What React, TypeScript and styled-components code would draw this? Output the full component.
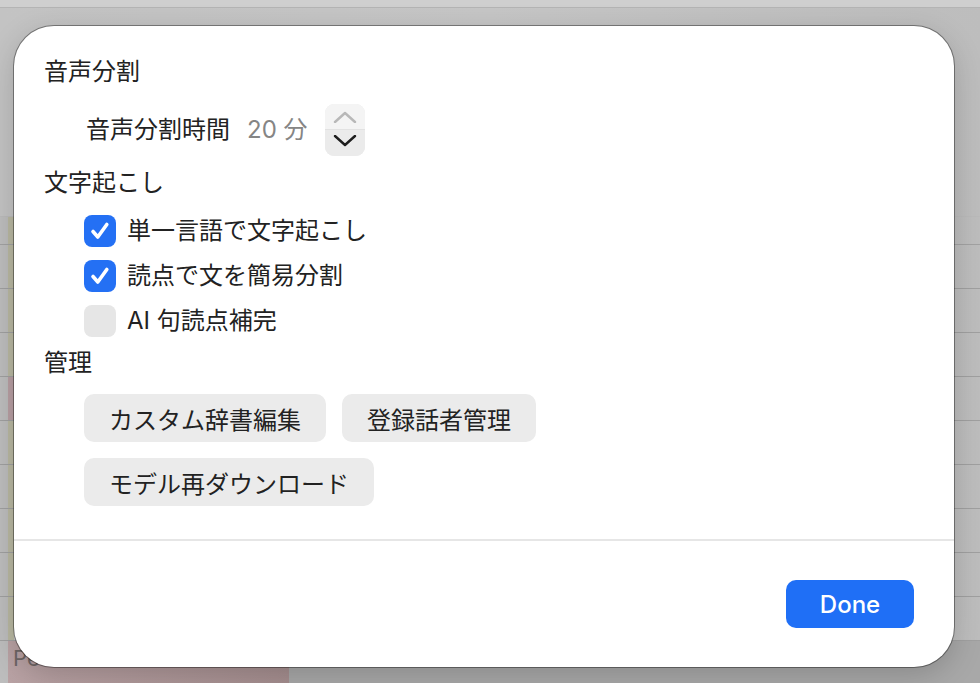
import styled, { createGlobalStyle } from "styled-components"

const GlobalStyle = createGlobalStyle`
  html, body {
    margin: 0;
    padding: 0;
  }
  body {
    width: 980px;
    height: 683px;
    overflow: hidden;
    font-family: Inter, "Noto Sans CJK JP", sans-serif;
    color: #222;
  }
`

const rows = [
  { tint: "#b9b8a2" },
  { tint: "#b9b8a2" },
  { tint: "#b9b8a2" },
  { tint: "#b89fa3" },
  { tint: "#b9b8a2" },
  { tint: "#b9b8a2" },
  { tint: "#b9b8a2" },
  { tint: "#b9b8a2" },
  { tint: "#b9b8a2" },
]

const checks = [
  { label: "単一言語で文字起こし", checked: true },
  { label: "読点で文を簡易分割", checked: true },
  { label: "AI 句読点補完", checked: false },
]

function Chevron({ up, color }: { up?: boolean; color: string }) {
  return (
    <svg width="24" height="12" viewBox="0 0 24 12">
      <polyline
        points={up ? "2,11 12,2 22,11" : "2,1 12,10 22,1"}
        fill="none"
        stroke={color}
        strokeWidth="2.4"
        strokeLinecap="round"
        strokeLinejoin="round"
      />
    </svg>
  )
}

function Check() {
  return (
    <svg width="22" height="22" viewBox="0 0 22 22">
      <polyline
        points="4,11.5 8.8,17 17.8,4.5"
        fill="none"
        stroke="#fff"
        strokeWidth="3.6"
        strokeLinecap="round"
        strokeLinejoin="round"
      />
    </svg>
  )
}

export default function App() {
  return (
    <Screen>
      <GlobalStyle />
      <TitleBar />
      <HeaderArea />
      <HeaderRow />
      {rows.map((r, i) => (
        <TableRow key={i}>
          <Gutter />
          <Tag $tint={r.tint} />
        </TableRow>
      ))}
      <LastRow>
        <Gutter />
        <PinkCell>Pe</PinkCell>
      </LastRow>

      <Modal>
        <Body>
          <Heading>音声分割</Heading>
          <StepperRow>
            <Label>音声分割時間</Label>
            <Value>20 分</Value>
            <Stepper>
              <StepHalf $top>
                <Chevron up color="#b8b8b8" />
              </StepHalf>
              <StepHalf>
                <Chevron color="#1e1e1e" />
              </StepHalf>
            </Stepper>
          </StepperRow>

          <Heading $gap={12}>文字起こし</Heading>
          <CheckList>
            {checks.map((c) => (
              <CheckRow key={c.label}>
                <CheckBox $checked={c.checked}>{c.checked && <Check />}</CheckBox>
                <Label>{c.label}</Label>
              </CheckRow>
            ))}
          </CheckList>

          <Heading $gap={11}>管理</Heading>
          <ButtonGrid>
            <ButtonLine>
              <PillButton>カスタム辞書編集</PillButton>
              <PillButton>登録話者管理</PillButton>
            </ButtonLine>
            <ButtonLine>
              <PillButton>モデル再ダウンロード</PillButton>
            </ButtonLine>
          </ButtonGrid>
        </Body>
        <Divider />
        <Footer>
          <DoneButton>Done</DoneButton>
        </Footer>
      </Modal>
    </Screen>
  )
}

const Screen = styled.div`
  position: relative;
  width: 980px;
  height: 683px;
  overflow: hidden;
  display: flex;
  flex-direction: column;
  background: linear-gradient(90deg, #c3c3c3 0%, #c6c6c6 50%, #bdbdbd 100%);
`

const TitleBar = styled.div`
  height: 7px;
  flex-shrink: 0;
  background: #cfcfcf;
  border-bottom: 1px solid #b4b4b4;
`

const HeaderArea = styled.div`
  height: 208px;
  flex-shrink: 0;
  border-bottom: 1px solid #bababa;
`

const HeaderRow = styled.div`
  height: 27px;
  flex-shrink: 0;
  display: flex;
  border-bottom: 1px solid #a2a2a2;
  background: linear-gradient(90deg, #bdbdbd 0 8px, #b9b8a2 8px 14px, transparent 14px);
`

const TableRow = styled.div`
  height: 43px;
  flex-shrink: 0;
  display: flex;
  border-bottom: 1px solid #a0a0a0;
`

const Gutter = styled.div`
  width: 8px;
  flex-shrink: 0;
  background: #bdbdbd;
`

const Tag = styled.div<{ $tint: string }>`
  width: 6px;
  background: ${(p) => p.$tint};
`

const LastRow = styled.div`
  flex: 1;
  display: flex;
  background: #a8a8a8;
`

const PinkCell = styled.div`
  width: 276px;
  padding: 4px 0 0 5px;
  font-size: 22px;
  line-height: 26px;
  color: #6e6666;
  background: linear-gradient(90deg, #b9a2a4, #a58e8f);
`

const Modal = styled.div`
  position: absolute;
  top: 26px;
  left: 14px;
  width: 940px;
  height: 641px;
  box-sizing: border-box;
  display: flex;
  flex-direction: column;
  background: #fff;
  border-radius: 40px;
  box-shadow: 0 0 0 1px rgba(0, 0, 0, 0.38), 0 8px 30px rgba(0, 0, 0, 0.18);
  overflow: hidden;
`

const Body = styled.div`
  display: flex;
  flex-direction: column;
  padding: 31px 30px 33px;
`

const Heading = styled.div<{ $gap?: number }>`
  margin-top: ${(p) => p.$gap ?? 0}px;
  height: 30px;
  font-size: 24px;
  line-height: 30px;
  color: #222;
`

const StepperRow = styled.div`
  margin-top: 17px;
  padding-left: 42px;
  height: 52px;
  display: flex;
  align-items: center;
`

const Label = styled.span`
  font-size: 24px;
  line-height: 30px;
  color: #222;
  white-space: nowrap;
`

const Value = styled.span`
  margin-left: 17px;
  font-size: 24px;
  line-height: 30px;
  color: #858585;
`

const Stepper = styled.div`
  margin-left: 17px;
  width: 40px;
  height: 52px;
  display: flex;
  flex-direction: column;
  border-radius: 9px;
  overflow: hidden;
  background: #ececec;
`

const StepHalf = styled.div<{ $top?: boolean }>`
  height: 26px;
  display: flex;
  justify-content: center;
  align-items: ${(p) => (p.$top ? "flex-end" : "flex-start")};
  padding: ${(p) => (p.$top ? "0 0 6px" : "5px 0 0")};
  box-sizing: border-box;
  background: ${(p) => (p.$top ? "#f4f4f4" : "#ebebeb")};
  border-bottom: ${(p) => (p.$top ? "1px solid #e2e2e2" : "none")};
`

const CheckList = styled.div`
  margin-top: 17px;
  padding-left: 40px;
  display: flex;
  flex-direction: column;
  gap: 13px;
`

const CheckRow = styled.div`
  height: 32px;
  display: flex;
  align-items: center;
  gap: 11px;
`

const CheckBox = styled.div<{ $checked: boolean }>`
  width: 32px;
  height: 32px;
  border-radius: 8px;
  display: flex;
  align-items: center;
  justify-content: center;
  background: ${(p) => (p.$checked ? "#2470f4" : "#e6e6e6")};
`

const ButtonGrid = styled.div`
  margin-top: 16px;
  padding-left: 40px;
  display: flex;
  flex-direction: column;
  gap: 16px;
`

const ButtonLine = styled.div`
  display: flex;
  gap: 16px;
`

const PillButton = styled.button`
  height: 48px;
  padding: 0 25px;
  border: none;
  border-radius: 10px;
  background: #ebebeb;
  font-family: inherit;
  font-size: 24px;
  color: #222;
  cursor: pointer;
`

const Divider = styled.div`
  height: 2px;
  background: #e6e6e6;
`

const Footer = styled.div`
  flex: 1;
  display: flex;
  justify-content: flex-end;
  align-items: flex-start;
  padding: 39px 40px 0 0;
`

const DoneButton = styled.button`
  width: 128px;
  height: 48px;
  border: none;
  border-radius: 10px;
  background: #1f6ff6;
  color: #fff;
  font-family: inherit;
  font-size: 24px;
  font-weight: 500;
  cursor: pointer;
`
